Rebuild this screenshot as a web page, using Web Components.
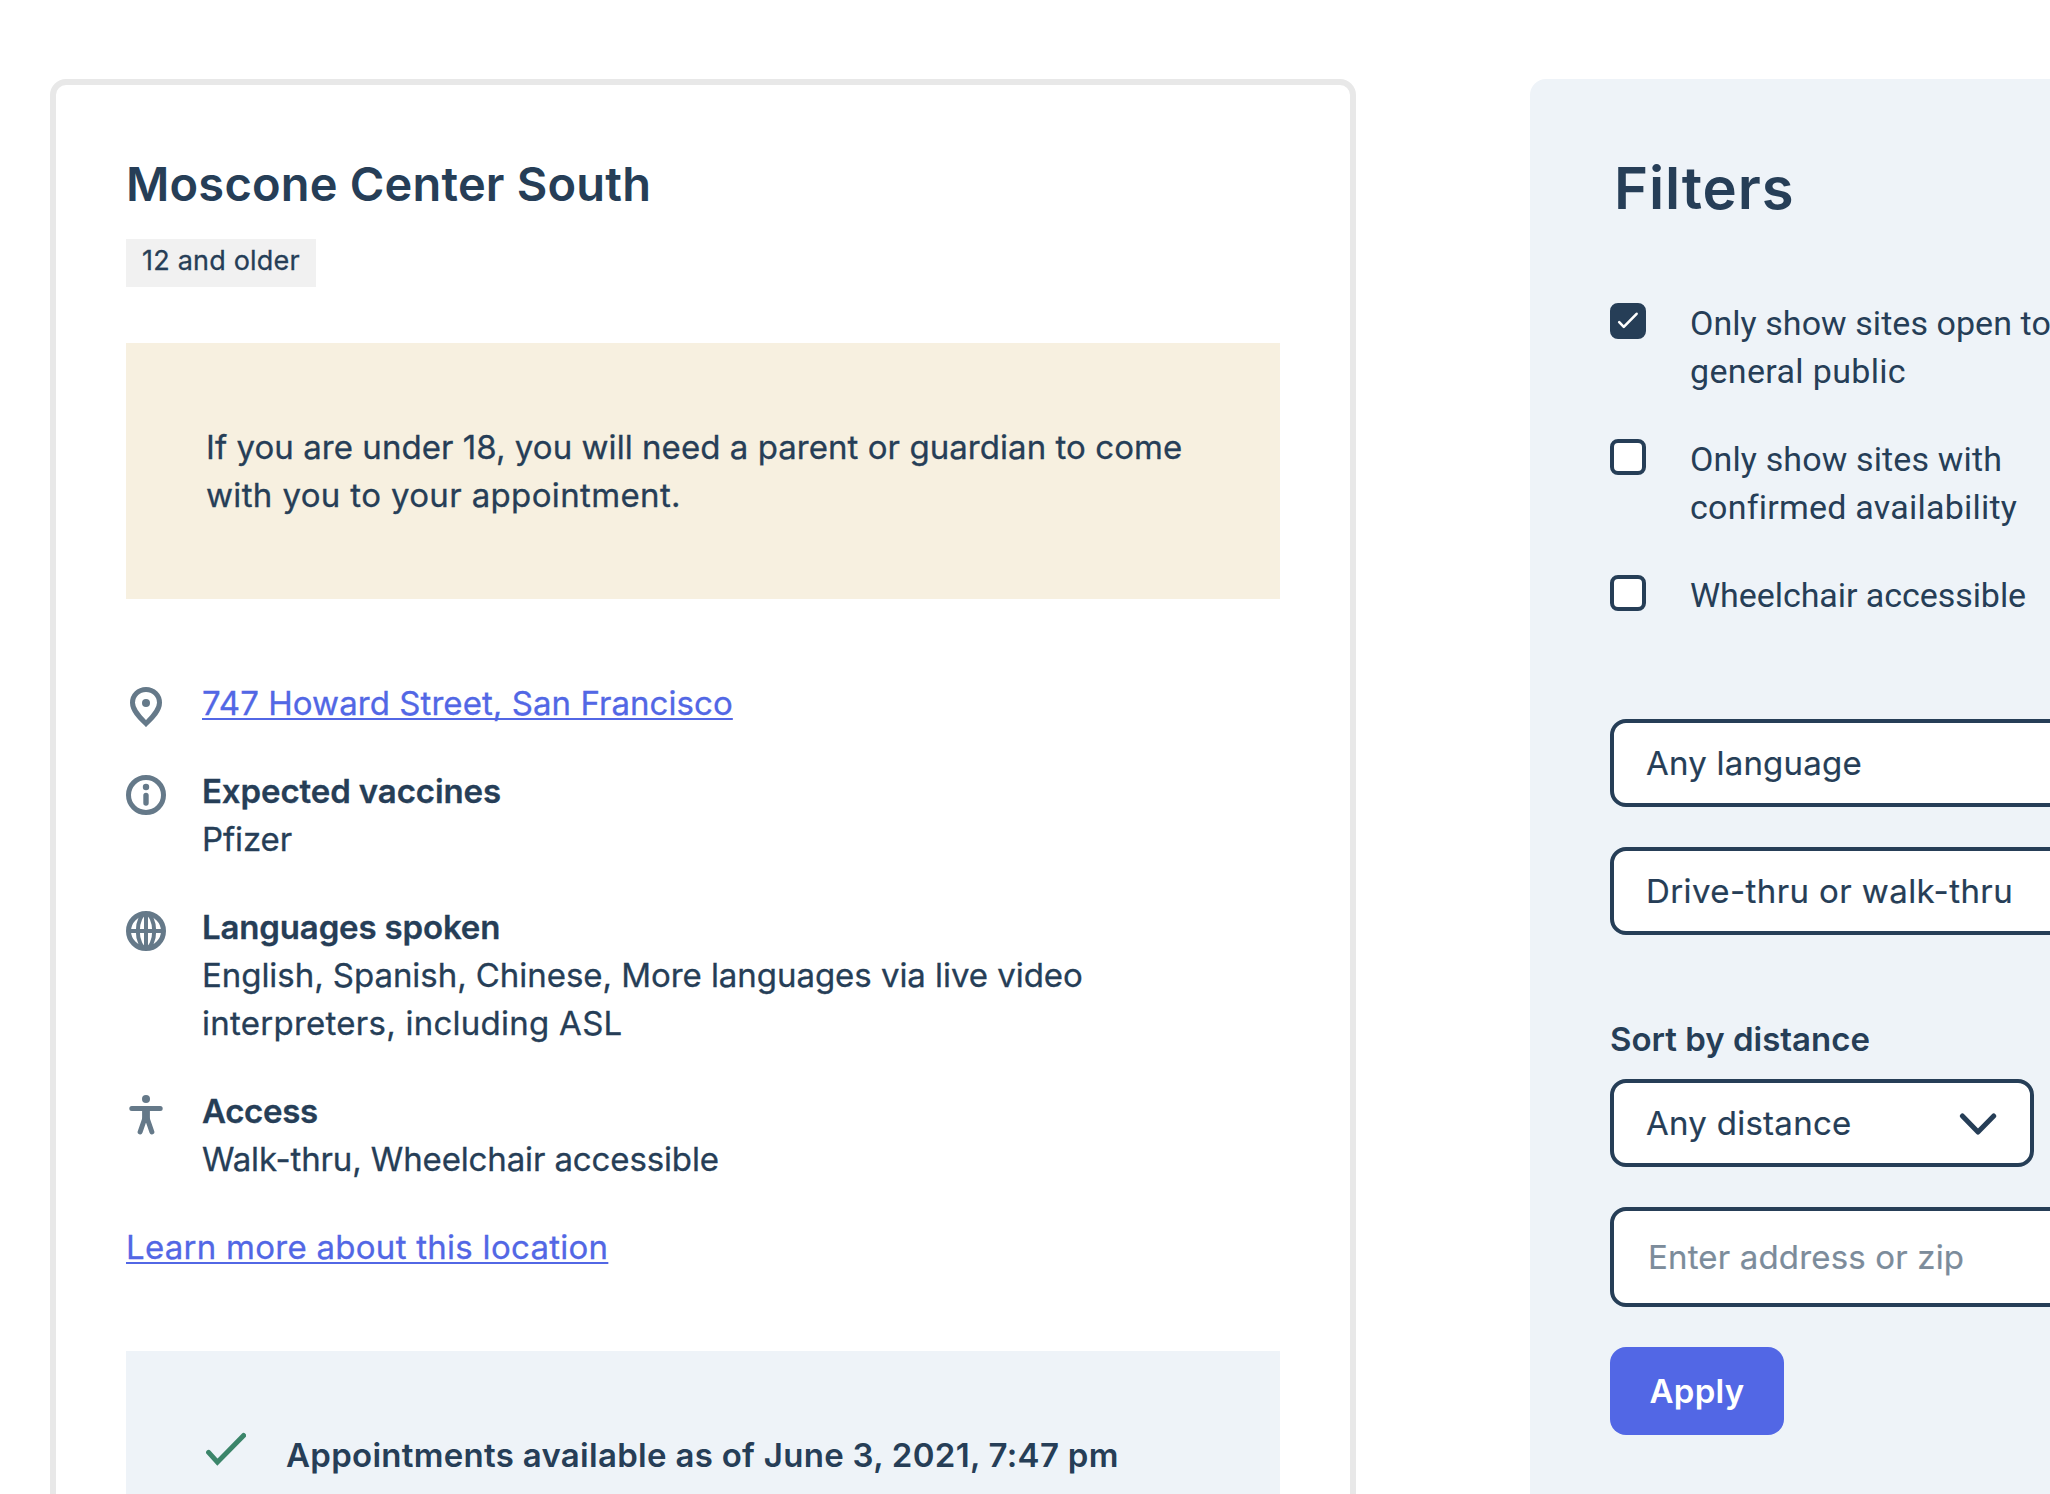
<!DOCTYPE html>
<html lang="en">
<head>
<meta charset="utf-8">
<title>Vaccination sites</title>
<style>
html,body{margin:0;height:100%;background:#fff}
body{overflow:hidden;font:400 33px/48px Inter,"Liberation Sans",sans-serif;color:#263e57}
</style>
</head>
<body>
<site-page></site-page>
<script>
const define = (name, css, html) => customElements.define(name, class extends HTMLElement {
  connectedCallback() {
    if (this.shadowRoot) return;
    const root = this.attachShadow({ mode: 'open' });
    root.innerHTML = `<style>*{box-sizing:border-box}${css}</style>${typeof html === 'function' ? html(this) : html}`;
  }
});

// One line of text; "ls" tunes its tracking.
define('text-line', `:host{display:block;white-space:nowrap}`, el => {
  el.style.letterSpacing = (el.getAttribute('ls') || 0) + 'px';
  return '<slot></slot>';
});

define('text-link', `:host{display:block}a{color:#5267e5;text-decoration:underline;text-decoration-thickness:2px;text-underline-offset:3px;text-decoration-skip-ink:none;white-space:nowrap}`,
  el => `<a style="letter-spacing:${el.getAttribute('ls') || 0}px"><slot></slot></a>`);

const icons = {
  pin: '<path d="M20 36.6C15 31.6 6.5 24 6.5 15.8C6.5 8.2 12.5 2.5 20 2.5S33.5 8.2 33.5 15.8C33.5 24 25 31.6 20 36.6Z" fill="none" stroke="currentColor" stroke-width="5"/><circle cx="20" cy="16" r="4"/>',
  info: '<circle cx="20" cy="20" r="17.5" fill="none" stroke="currentColor" stroke-width="5"/><circle cx="20" cy="12" r="3.2"/><rect x="17.3" y="17.8" width="5.4" height="13" rx="2.7"/>',
  globe: '<g fill="none" stroke="currentColor"><circle cx="20" cy="20" r="17.5" stroke-width="5"/><ellipse cx="20" cy="20" rx="8.2" ry="17.2" stroke-width="4"/><path d="M20 2V38M2 20H38" stroke-width="4"/></g>',
  access: '<circle cx="20" cy="4" r="4"/><g fill="none" stroke="currentColor" stroke-width="5" stroke-linecap="round"><path d="M5.8 13.5H34.2M18.6 24L14.1 37M21.4 24L25.9 37"/></g><path d="M16.1 13.5H23.9V25L20 27.5L16.1 25Z"/>',
  check: '<path d="M2.6 21.4L11.4 31.2L37.6 4.5" fill="none" stroke="#3b856a" stroke-width="5" stroke-linecap="round" stroke-linejoin="miter"/>'
};
define('site-icon', `:host{display:block;flex:none;width:40px;height:40px;color:#657989}svg{display:block}`,
  el => `<svg width="40" height="40" viewBox="0 0 40 40" fill="currentColor">${icons[el.getAttribute('name')]}</svg>`);

define('detail-row', `:host{display:flex;gap:36px;align-items:flex-start}site-icon{margin-top:8px}
  .head{font-weight:600}`,
  el => `<site-icon name="${el.getAttribute('icon')}"></site-icon><div><div class="head"><slot name="head"></slot></div><slot></slot></div>`);

define('site-card', `:host{display:flex;flex-direction:column;flex:none;box-sizing:border-box;width:1306px;height:1700px;border:6px solid #e8e8e8;border-radius:16px;padding:70px}
  :host>*,h2,.tag,.note,.details,.status{flex:none}
  h2{margin:0;font:600 47px/56px Inter,sans-serif;padding-top:1px}
  .tag{align-self:flex-start;background:#f1f1f1;width:190px;height:48px;padding:0 16px;font-size:27px;line-height:44px;margin-top:27px}
  .note{background:#f7f0e0;padding:80px;margin:56px 0 80px}
  .tag,.note,.details{-webkit-text-stroke:.3px}
  .details{display:flex;flex-direction:column;gap:40px}
  .status{display:flex;gap:40px;background:#eef3f8;padding:80px;margin-top:80px;height:320px;font-weight:600}`,
`<h2><text-line ls=".2">Moscone Center South</text-line></h2>
<div class="tag"><text-line ls=".2">12 and older</text-line></div>
<div class="note"><text-line ls=".05">If you are under 18, you will need a parent or guardian to come</text-line><text-line ls=".36">with you to your appointment.</text-line></div>
<div class="details">
<detail-row icon="pin"><text-link ls=".06">747 Howard Street, San Francisco</text-link></detail-row>
<detail-row icon="info"><text-line slot="head" ls="-.11">Expected vaccines</text-line><text-line ls="-.1">Pfizer</text-line></detail-row>
<detail-row icon="globe"><text-line slot="head" ls="-.16">Languages spoken</text-line><text-line ls="-.05">English, Spanish, Chinese, More languages via live video</text-line><text-line ls=".26">interpreters, including ASL</text-line></detail-row>
<detail-row icon="access"><text-line slot="head" ls="-.33">Access</text-line><text-line ls="-.13">Walk-thru, Wheelchair accessible</text-line></detail-row>
<text-link ls=".27">Learn more about this location</text-link>
</div>
<div class="status"><site-icon name="check"></site-icon><text-line ls=".29">Appointments available as of June 3, 2021, 7:47 pm</text-line></div>`);

define('check-option', `:host{display:flex;gap:44px;align-items:flex-start;font-family:Roboto,sans-serif;font-size:34px}
  .box{flex:none;width:36px;height:36px;margin-top:4px;border:4px solid #263e57;border-radius:8px;background:#fff}
  :host([checked]) .box{background:#263e57}
  svg{display:block;margin:-4px;visibility:hidden}:host([checked]) svg{visibility:visible}`,
`<div class="box"><svg width="36" height="36" viewBox="0 0 36 36"><path d="M9.2 19.2L13.8 23.8L26.6 10.8" fill="none" stroke="#fff" stroke-width="2.6" stroke-linecap="round" stroke-linejoin="round"/></svg></div><div><slot></slot></div>`);

define('select-field', `:host{display:flex;align-items:center;justify-content:space-between;height:88px;border:4px solid #263e57;border-radius:16px;background:#fff;padding:0 32px;box-sizing:border-box;-webkit-text-stroke:.2px}
  svg{display:block;flex:none}`,
`<slot></slot><svg width="40" height="24" viewBox="0 0 40 24"><path d="M4.4 5L20 21L35.7 5" fill="none" stroke="#263e57" stroke-width="5" stroke-linecap="round" stroke-linejoin="round"/></svg>`);

define('text-field', `:host{display:flex;align-items:center;height:100px;border:4px solid #263e57;border-radius:16px;background:#fff;padding:0 34px;box-sizing:border-box;color:#7c8c9b;-webkit-text-stroke:.2px}`, '<slot></slot>');

define('apply-button', `:host{display:flex;align-items:center;align-self:flex-start;justify-content:center;width:174px;height:88px;border-radius:16px;background:#5267e5;color:#fff;font-weight:600;box-sizing:border-box}`, '<slot></slot>');

define('filter-panel', `:host{display:flex;flex-direction:column;flex:none;width:700px;height:1600px;box-sizing:border-box;background:#eef3f8;border-radius:16px;padding:73px 80px}
  h2{margin:0 0 75px;padding-left:4px;font:600 58px/72px Inter,sans-serif}
  .options{display:flex;flex-direction:column;gap:40px;margin-bottom:100px}
  .fields{display:flex;flex-direction:column;gap:40px}
  .sort{font-weight:600;margin:80px 0 16px}
  .near{display:flex;flex-direction:column;gap:40px}
  .short{width:424px}`,
`<h2><text-line ls=".85">Filters</text-line></h2>
<div class="options">
<check-option checked><text-line ls=".06">Only show sites open to</text-line><text-line ls=".34">general public</text-line></check-option>
<check-option><text-line ls=".14">Only show sites with</text-line><text-line ls=".23">confirmed availability</text-line></check-option>
<check-option><text-line ls="-.06">Wheelchair accessible</text-line></check-option>
</div>
<div class="fields"><select-field><text-line ls=".21">Any language</text-line></select-field><select-field><text-line ls=".41">Drive-thru or walk-thru</text-line></select-field></div>
<div class="sort"><text-line>Sort by distance</text-line></div>
<div class="near"><select-field class="short"><text-line ls=".27">Any distance</text-line></select-field>
<text-field><text-line ls=".17">Enter address or zip</text-line></text-field>
<apply-button><text-line ls=".25">Apply</text-line></apply-button></div>`);

define('site-page', `:host{display:flex;align-items:flex-start;gap:174px;width:2050px;height:1494px;overflow:hidden;padding:79px 0 0 50px;box-sizing:border-box}`,
`<site-card></site-card><filter-panel></filter-panel>`);
</script>
</body>
</html>
